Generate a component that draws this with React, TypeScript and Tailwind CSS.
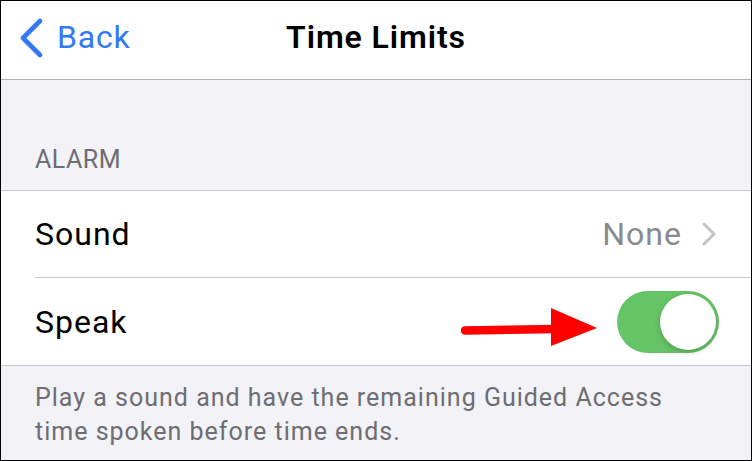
import React from "react";

export default function App() {
  return (
    <div
      className="w-[752px] h-[461px] border border-black bg-[#f2f2f7] overflow-hidden flex flex-col"
      style={{ fontFamily: "Roboto, 'Liberation Sans', sans-serif" }}
    >
      {/* Nav bar */}
      <div className="h-[79px] shrink-0 bg-[#fefefe] border-b border-[#b1b1b3] grid grid-cols-[1fr_auto_1fr] items-center">
        <div className="flex items-center pl-[17px] mt-[-6px]">
          <svg width="26" height="40" viewBox="0 0 26 40" className="mt-[2px]">
            <polyline
              points="22,3 5,20 22,37"
              fill="none"
              stroke="#3478f6"
              strokeWidth="4.6"
              strokeLinecap="round"
              strokeLinejoin="round"
            />
          </svg>
          <span className="ml-[13px] text-[32px] tracking-[0.8px] leading-none text-[#3478f6]">Back</span>
        </div>
        <div className="text-[32px] font-semibold tracking-[0.9px] leading-none text-black mt-[-6px]">Time Limits</div>
        <div />
      </div>

      {/* Section header */}
      <div className="h-[110px] shrink-0 flex items-end pl-[34px] pb-[15px]">
        <span className="text-[25px] tracking-[0.5px] leading-[30px] text-[#6d6d72]">ALARM</span>
      </div>

      {/* Group */}
      <div className="bg-white border-y border-[#c8c7cc] shrink-0">
        <div className="pl-[34px]">
          <div className="h-[87px] border-b border-[#c8c7cc] flex items-center justify-between pr-[35px]">
            <span className="text-[32px] tracking-[1px] leading-none text-black">Sound</span>
            <div className="flex items-center">
              <span className="text-[32px] tracking-[1px] leading-none text-[#8a8a8e]">None</span>
              <svg width="14" height="24" viewBox="0 0 14 24" className="ml-[20px]">
                <polyline
                  points="2,2 12,12 2,22"
                  fill="none"
                  stroke="#c4c4c7"
                  strokeWidth="3"
                  strokeLinecap="round"
                  strokeLinejoin="round"
                />
              </svg>
            </div>
          </div>
        </div>
        <div className="pl-[34px] h-[87px] flex items-center pr-[32px]">
          <span className="text-[32px] tracking-[1px] leading-none text-black">Speak</span>
          <div className="flex-1" />
          <svg width="140" height="44" viewBox="0 0 140 44" className="mr-[16px] mt-[8px]">
            <path d="M4 26.5 L96 25" stroke="#ff0000" strokeWidth="8.5" strokeLinecap="round" />
            <polygon points="90,4 136,24 90,42" fill="#ff0000" />
          </svg>
          <div className="w-[102px] h-[62px] rounded-full bg-[#65c466] flex items-center justify-end pr-[3px]">
            <div className="w-[56px] h-[56px] rounded-full bg-white shadow-[0_2px_6px_rgba(0,0,0,0.2)]" />
          </div>
        </div>
      </div>

      {/* Footer */}
      <div className="pl-[34px] pr-[20px] pt-[15px] text-[25px] tracking-[1px] leading-[34px] text-[#6d6d72] whitespace-nowrap">
        Play a sound and have the remaining Guided Access
        <br />
        time spoken before time ends.
      </div>
    </div>
  );
}
